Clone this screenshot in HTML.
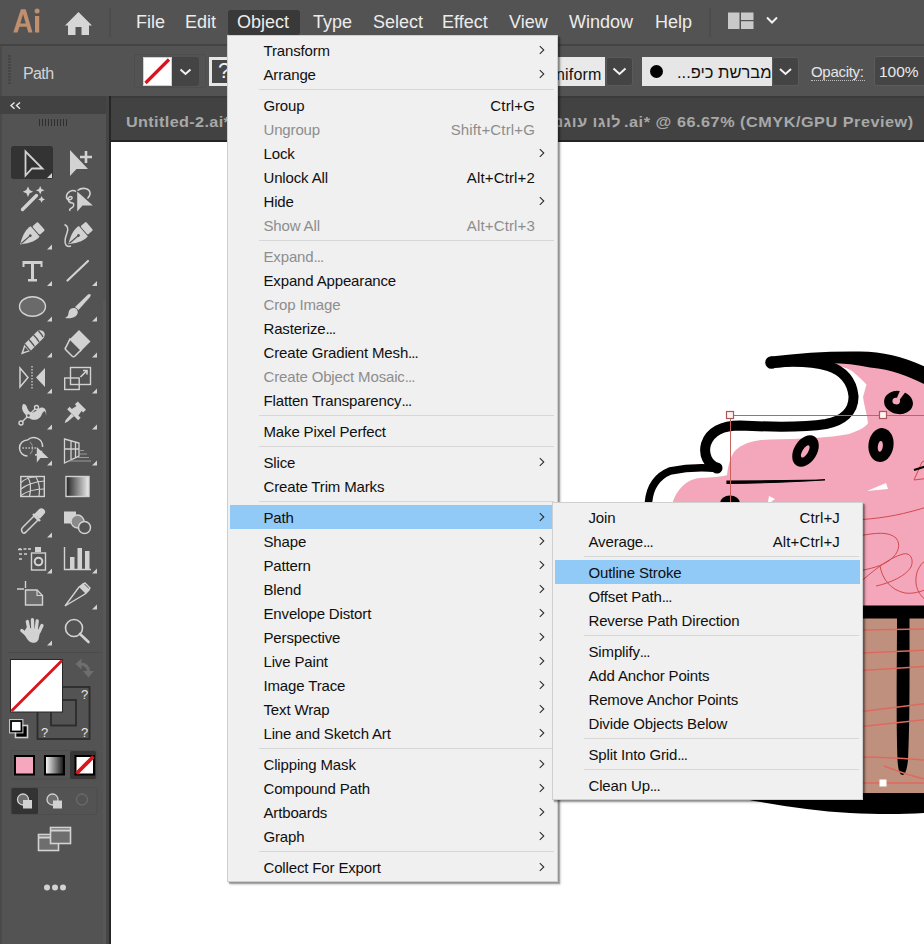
<!DOCTYPE html>
<html><head><meta charset="utf-8">
<style>
*{margin:0;padding:0;box-sizing:border-box}
html,body{width:924px;height:944px;overflow:hidden;background:#535353;font-family:"Liberation Sans",sans-serif;position:relative}
.a{position:absolute}
.mb{position:absolute;color:#ececec;font-size:18px;top:12px;white-space:nowrap}
.mi{position:absolute;font-size:15px;white-space:nowrap;letter-spacing:-0.15px}
.menu{position:absolute;background:#f0f0f0;border:1px solid #cfcfcf;box-shadow:1px 1px 0 rgba(0,0,0,.12),2px 2px 1px rgba(0,0,0,.25),3px 3px 2px rgba(0,0,0,.12)}
.tri{position:absolute;width:0;height:0;border-left:5px solid transparent;border-bottom:5px solid #d0d0d0}
svg{position:absolute;overflow:visible}
</style></head><body>
<!-- menu bar -->
<div class="a" style="left:0;top:0;width:924px;height:44px;background:#535353"></div>
<svg style="left:0;top:0" width="110" height="44">
 <path d="M13.3 32.5 L20.9 9.3 L25.7 9.3 L32.5 32.5 L28.3 32.5 L26.7 26.8 L19.4 26.8 L17.6 32.5 Z M20.3 23.4 L25.8 23.4 L23.05 14 Z" fill="#c08f6e" fill-rule="evenodd"/>
 <rect x="35" y="16" width="4.2" height="16.5" fill="#c08f6e"/>
 <circle cx="37.1" cy="11" r="2.5" fill="#c08f6e"/>
 <path d="M65 25.5 L78.5 12 L92 25.5 L89 25.5 L89 35 L81.5 35 L81.5 27 L75.5 27 L75.5 35 L68 35 L68 25.5 Z" fill="#d6d6d6"/>
</svg>
<div class="a" style="left:109px;top:8px;width:2px;height:29px;background:#4c4c4c"></div>
<div class="mb" style="left:136px">File</div>
<div class="mb" style="left:185px">Edit</div>
<div class="a" style="left:228px;top:10px;width:72px;height:25px;background:#393939;border-radius:3px"></div>
<div class="mb" style="left:237px">Object</div>
<div class="mb" style="left:313px">Type</div>
<div class="mb" style="left:373px">Select</div>
<div class="mb" style="left:442px">Effect</div>
<div class="mb" style="left:509px">View</div>
<div class="mb" style="left:569px">Window</div>
<div class="mb" style="left:655px">Help</div>
<div class="a" style="left:709px;top:8px;width:2px;height:29px;background:#4c4c4c"></div>
<svg style="left:720px;top:0" width="70" height="44">
 <rect x="8" y="12.5" width="11.5" height="16.5" fill="#c9c9c9"/>
 <rect x="21" y="12.5" width="12.5" height="7.5" fill="#c9c9c9"/>
 <rect x="21" y="21.2" width="12.5" height="7.8" fill="#c9c9c9"/>
 <path d="M47 17.5 L52 22.5 L57 17.5" fill="none" stroke="#f2f2f2" stroke-width="2"/>
</svg>

<!-- control bar -->
<div class="a" style="left:0;top:44px;width:924px;height:2px;background:#444444"></div>
<div class="a" style="left:0;top:46px;width:924px;height:50px;background:#535353;border-left:2px solid #4a4a4a"></div>
<svg style="left:0;top:46px" width="20" height="50">
 <path d="M8 10h3M8 13h3M8 16h3M8 19h3M8 22h3M8 25h3M8 28h3M8 31h3M8 34h3M8 37h3" stroke="#3a3a3a" stroke-width="1"/>
</svg>
<div class="a" style="left:23px;top:64.5px;font-size:16px;color:#d4d4d4;letter-spacing:-0.6px">Path</div>
<div class="a" style="left:134px;top:54px;width:72px;height:34px;border:1px solid #4d4d4d;border-radius:3px"></div>
<div class="a" style="left:143px;top:57px;width:29px;height:29px;background:#fff;border:1px solid #d0d0d0"></div>
<svg style="left:143px;top:57px" width="29" height="29"><path d="M2.5 26 L26 2.5" stroke="#d9141b" stroke-width="3.2"/></svg>
<div class="a" style="left:172px;top:57px;width:27px;height:29px;background:#444;border-radius:0 3px 3px 0"></div>
<svg style="left:172px;top:57px" width="27" height="29"><path d="M8.5 12.5 L13.5 17 L18.5 12.5" fill="none" stroke="#f2f2f2" stroke-width="2"/></svg>
<div class="a" style="left:209px;top:57px;width:30px;height:29px;background:#474747;border:3px solid #e6e6e6"></div>
<div class="a" style="left:218px;top:58px;font-size:22px;color:#f0f0f0">?</div>
<div class="a" style="left:545px;top:57px;width:60px;height:29px;background:#e9e9e9"></div>
<div class="a" style="left:556px;top:66px;font-size:16px;color:#111;letter-spacing:0.2px">niform</div>
<div class="a" style="left:606px;top:57px;width:27px;height:29px;background:#444;border:1px solid #5a5a5a;border-radius:3px"></div>
<svg style="left:606px;top:57px" width="27" height="29"><path d="M7.5 11.5 L13.5 17 L19.5 11.5" fill="none" stroke="#f2f2f2" stroke-width="2"/></svg>
<div class="a" style="left:642px;top:57px;width:130px;height:29px;background:#e6e6e6"></div>
<div class="a" style="left:650px;top:65px;width:13px;height:13px;border-radius:50%;background:#000"></div>
<div class="a" style="left:677px;top:63px;font-size:16.5px;color:#111;white-space:nowrap"><bdo dir="ltr">...פיכ תשרבמ</bdo></div>
<div class="a" style="left:772px;top:57px;width:27px;height:29px;background:#444;border:1px solid #5a5a5a;border-radius:3px"></div>
<svg style="left:772px;top:57px" width="27" height="29"><path d="M8 12 L13.5 17 L19 12" fill="none" stroke="#f2f2f2" stroke-width="2"/></svg>
<div class="a" style="left:811px;top:63px;font-size:15px;color:#e6e6e6;letter-spacing:-0.3px">Opacity:</div>
<div class="a" style="left:811px;top:80px;width:54px;height:0;border-top:1px dotted #bdbdbd"></div>
<div class="a" style="left:874px;top:56px;width:60px;height:30px;background:#454545;border:1px solid #5c5c5c;border-radius:3px"></div>
<div class="a" style="left:879px;top:63px;font-size:15.5px;color:#eaeaea">100%</div>

<!-- doc tab bar -->
<div class="a" style="left:111px;top:96px;width:813px;height:2px;background:#3b3b3b"></div>
<div class="a" style="left:111px;top:98px;width:813px;height:43px;background:#424242"></div>
<div class="a" style="left:111px;top:140px;width:813px;height:2px;background:#242424"></div>
<div class="a" style="left:126px;top:113px;font-size:15px;font-weight:bold;color:#a8a8a8;white-space:nowrap;letter-spacing:0.35px;transform:scaleX(1.08);transform-origin:0 0">Untitled-2.ai*</div>
<div id="heb" class="a" style="right:303px;top:113px;font-size:15px;font-weight:bold;color:#a8a8a8;white-space:nowrap;letter-spacing:0.4px;transform:scaleX(1.08);transform-origin:100% 0"><bdo dir="ltr">נגוע וגול</bdo></div>
<div id="tabr" class="a" style="left:624px;top:113px;font-size:15px;font-weight:bold;color:#a8a8a8;white-space:nowrap;letter-spacing:0.5px;transform:scaleX(1.08);transform-origin:0 0">.ai* @ 66.67% (CMYK/GPU Preview)</div>
<div class="a" style="left:111px;top:142px;width:813px;height:802px;background:#ffffff"></div>
<!-- toolbar -->
<div class="a" style="left:0;top:96px;width:111px;height:848px;background:#535353"></div>
<div class="a" style="left:0;top:114px;width:2px;height:830px;background:#4a4a4a"></div>
<div class="a" style="left:0;top:96px;width:107px;height:18px;background:#424242"></div>
<div class="a" style="left:103px;top:300px;width:3px;height:644px;background:#575757"></div>
<div class="a" style="left:106px;top:96px;width:3px;height:848px;background:#454545"></div>
<div class="a" style="left:109px;top:96px;width:2px;height:848px;background:#262626"></div>
<svg style="left:0;top:0" width="111" height="944">
 <g fill="none" stroke="#e8e8e8" stroke-width="1.4"><path d="M14.5 102.5 L11 105.6 L14.5 108.7 M20 102.5 L16.5 105.6 L20 108.7"/></g>
 <g stroke="#2f2f2f" stroke-width="1"><path d="M39.5 119v7M42.5 119v7M45.5 119v7M48.5 119v7M51.5 119v7M54.5 119v7M57.5 119v7M60.5 119v7M63.5 119v7M66.5 119v7"/></g>
 <!-- row1 selection -->
 <rect x="11" y="146" width="42" height="33" rx="2.5" fill="#333333"/>
 <path d="M25.5 151.5 L25.5 175.5 L32 168.5 L42.5 168.5 Z" fill="none" stroke="#d2d2d2" stroke-width="1.8" stroke-linejoin="miter"/>
 <path d="M70 150 L70 176 L76.5 169 L88 169 Z" fill="#d2d2d2"/>
 <path d="M86 151 v12 M80 157 h12" stroke="#d2d2d2" stroke-width="2.6"/>
 <!-- row2 wand, lasso -->
 <path d="M22.5 209.5 L36.5 195.5" stroke="#d2d2d2" stroke-width="3.4" stroke-linecap="round"/>
 <path d="M28 186.5 l1.6 3.6 3.6 1.6 -3.6 1.6 -1.6 3.6 -1.6 -3.6 -3.6 -1.6 3.6 -1.6z M40.2 186 l1.3 3 3 1.3 -3 1.3 -1.3 3 -1.3 -3 -3 -1.3 3 -1.3z M41.6 196 l1.1 2.3 2.3 1.1 -2.3 1.1 -1.1 2.3 -1.1 -2.3 -2.3 -1.1 2.3 -1.1z" fill="#d2d2d2"/>
 <path d="M76 191.5 C72 189 67 192 66.5 196 C66 200 70 200.5 71.5 199 C73.5 197 70 195.5 68.5 198 C67 201 70 203 72.5 203 C74.5 203.5 74 207 71.5 208 C69.5 209 69 210 70.5 210.5" fill="none" stroke="#d2d2d2" stroke-width="1.5"/>
 <path d="M77.5 190.5 C82 187 89 188 90 192.5 C90.5 195 89 197 87.5 198.5" fill="none" stroke="#d2d2d2" stroke-width="1.5"/>
 <path d="M77.2 191.5 L77.2 211.5 L82.5 205.5 L92.8 205.5 Z" fill="#d2d2d2"/>
 <!-- row3 pen, curvature -->
 <g transform="translate(38.6 228.4) rotate(49)" fill="#d2d2d2"><rect x="-5.6" y="-3.6" width="11.2" height="7.2" rx="1.2"/><path d="M-6.8 4.6 H6.8 C7.6 9.5 6.5 15 0 24.5 C-6.5 15 -7.6 9.5 -6.8 4.6 Z"/><path d="M0 11 V23" stroke="#535353" stroke-width="1.3"/><circle cx="0" cy="11" r="1.4" fill="#535353"/></g>
 <g transform="translate(86.8 228.2) rotate(49)" fill="#d2d2d2"><rect x="-5.6" y="-3.6" width="11.2" height="7.2" rx="1.2"/><path d="M-6.8 4.6 H6.8 C7.6 9.5 6.5 15 0 24.5 C-6.5 15 -7.6 9.5 -6.8 4.6 Z"/><path d="M0 11 V23" stroke="#535353" stroke-width="1.3"/><circle cx="0" cy="11" r="1.4" fill="#535353"/></g>
 <path d="M64.5 224.5 C68 226 68.5 229 67 233 C65 238 64 242 66 245 C67.5 247 69.5 246.5 71 246" fill="none" stroke="#d2d2d2" stroke-width="1.5"/>
 <!-- row4 type, line -->
 <path d="M22.5 261 h20 v6 h-2 v-3 h-6.5 v15 h3 v2.5 h-9 v-2.5 h3 v-15 h-6.5 v3 h-2z" fill="#d2d2d2"/>
 <path d="M67.5 280.5 L88 261" stroke="#d2d2d2" stroke-width="2.2" stroke-linecap="round"/>
 <!-- row5 ellipse, brush -->
 <ellipse cx="32.5" cy="306.5" rx="13" ry="9.8" fill="#6a6a6a" stroke="#d2d2d2" stroke-width="1.4"/>
 <path d="M75 307 L88 294.5 C90.5 293 91.5 295 90 297 L78.5 310 Z" fill="#d2d2d2"/>
 <path d="M74.5 308 C78 309 79 313 76 316 C73 318.5 68 318.5 65 318 C69 316 68 314 69 311 C70 308.5 72.5 307.5 74.5 308Z" fill="#d2d2d2"/>
 <!-- row6 shaper pencil, eraser -->
 <path d="M21 354.5 L24.5 344 L37 331.5 C39.5 329.5 43 330 44.5 333 C45 335 44.5 337 43 338.5 L30.5 351 Z" fill="#d2d2d2"/>
 <path d="M24.5 344 L30.5 351 M29 339.5 C31 342 33 344 34.5 346.5 M33.5 335 C36 337.5 38 339.5 39 342 M38.5 331 C40.5 333 42 334.5 43 337" stroke="#535353" stroke-width="1.3" fill="none"/>
 <path d="M23.5 352 L25 347 L28.5 350.5Z" fill="#535353"/>
 <path d="M79 330 L90.5 341.5 L80 352 L68.5 340.5 Z" fill="#d2d2d2"/>
 <path d="M70 339 L81 350 L75 356 C74 357 73 357 72 356 L66 350 C65 349 65 348 66 347 Z" fill="#535353" stroke="#d2d2d2" stroke-width="1.6"/>
 <!-- row7 reflect, scale -->
 <path d="M20 368 L28 377.5 L20 387 Z" fill="none" stroke="#d2d2d2" stroke-width="1.5"/>
 <path d="M45 368 L36 377.5 L45 387 Z" fill="#d2d2d2"/>
 <path d="M32 366 V390" stroke="#d2d2d2" stroke-width="1.3" stroke-dasharray="1.5 1.5"/>
 <rect x="70.5" y="367.5" width="20" height="17" fill="none" stroke="#d2d2d2" stroke-width="1.4"/>
 <rect x="64.7" y="378" width="14.5" height="11.5" fill="none" stroke="#d2d2d2" stroke-width="1.4"/>
 <path d="M80.5 377 L87 370.5 M83 370.5 h4 v4" fill="none" stroke="#d2d2d2" stroke-width="1.6"/>
 <!-- row8 puppet, pin -->
 <path d="M23 404 C20 410 25 414 28 417 C33 422 40 420 42 414 C44 410 46 410 46 416 C47 411 45 406 40 408 C36 410 34 414 30 412 C26 409 28 404 23 404Z" fill="#d2d2d2"/>
 <path d="M21 423 L36.5 407.5" stroke="#d2d2d2" stroke-width="1.4"/>
 <circle cx="21" cy="423" r="2" fill="#535353" stroke="#d2d2d2" stroke-width="1.4"/>
 <circle cx="36.5" cy="407.5" r="2" fill="#535353" stroke="#d2d2d2" stroke-width="1.4"/>
 <circle cx="28.5" cy="415.5" r="2" fill="#535353" stroke="#d2d2d2" stroke-width="1.4"/>
 <g transform="translate(80.8 406.7) rotate(45)" fill="#d2d2d2"><path d="M-5.8 -1.5 H5.8 V2.5 H3.6 L4.6 8 H7.8 V11.5 H-7.8 V8 H-4.6 L-3.6 2.5 H-5.8 Z"/><path d="M-1.9 11.5 H1.9 L1.3 20 L0 23 L-1.3 20 Z"/></g>
 <!-- row9 shape builder, perspective grid -->
 <path d="M27.5 456 A8 8 0 1 1 27.5 440 M27.5 440 A9 9 0 0 1 42.6 447 M42 451 A9 9 0 0 1 35 455" fill="none" stroke="#d2d2d2" stroke-width="1.5"/>
 <path d="M30 442 A8 8 0 0 1 30 454" fill="none" stroke="#8a8a8a" stroke-width="1.2"/>
 <path d="M22.5 448h1.3M25.5 448h1.3M28.5 448h1.3M31.5 448h1.3M34.5 448h1.3" stroke="#d2d2d2" stroke-width="1.4"/>
 <path d="M36.8 447 L36.8 462.5 L40.5 458 L48.5 458 Z" fill="#d2d2d2"/>
 <path d="M64.5 439 L79 443 L79 456 L64.5 463 Z M64.5 449 L79 449 M71 440.5 L71 460 M75.5 442 L75.5 458" fill="none" stroke="#d2d2d2" stroke-width="1.3"/>
 <path d="M79 450.5 h5 M79 454 h8 M78 457.5 h11 M68 461 h23" stroke="#9a9a9a" stroke-width="1.2"/>
 <!-- row10 mesh, gradient -->
 <rect x="20.8" y="476.5" width="23.5" height="20" fill="none" stroke="#d2d2d2" stroke-width="1.4"/>
 <path d="M21 482.5 C25 479 30 477 35 477 M21 489 C26 485 33 482 44 481 M21 495.5 C27 491 35 489 44 489 M27.5 477 C31 482 31 490 29.5 496.5 M36 477 C39 482 40 490 39 496.5" fill="none" stroke="#d2d2d2" stroke-width="1.2"/>
 <defs><linearGradient id="gt" x1="0" x2="1"><stop offset="0" stop-color="#222"/><stop offset="1" stop-color="#eee"/></linearGradient>
 <linearGradient id="gs" x1="0" x2="1"><stop offset="0" stop-color="#fff"/><stop offset="1" stop-color="#111"/></linearGradient></defs>
 <rect x="66" y="476.5" width="23" height="20" fill="url(#gt)" stroke="#d2d2d2" stroke-width="1.4"/>
 <!-- row11 eyedropper, blend -->
 <path d="M23 533 C21 531 21 529 23 527 L34 516 L38 520 L27 531 C25 533 24.5 534 23 533Z" fill="none" stroke="#d2d2d2" stroke-width="1.5"/>
 <path d="M33 514 L40 521 M35 515 L40 510 C42 508.5 45 511 43.5 513 L39 518" fill="#d2d2d2" stroke="#d2d2d2" stroke-width="2.4"/>
 <rect x="64" y="511.5" width="12" height="12" fill="#d2d2d2"/>
 <circle cx="77.5" cy="521.5" r="6.5" fill="#8a8a8a" stroke="#d2d2d2" stroke-width="1.4"/>
 <circle cx="84.5" cy="527.5" r="6" fill="#535353" stroke="#d2d2d2" stroke-width="1.5"/>
 <!-- row12 symbol sprayer, graph -->
 <rect x="31.5" y="553" width="14" height="17" fill="none" stroke="#d2d2d2" stroke-width="1.4"/>
 <circle cx="38.5" cy="561.5" r="3.8" fill="none" stroke="#d2d2d2" stroke-width="2"/>
 <rect x="35" y="547" width="6" height="5" fill="#d2d2d2"/>
 <path d="M19 549h2M18 549.5h4 M23.5 549h3M28 549h3M19 554h3M24 554h3M19 559h3" stroke="#d2d2d2" stroke-width="1.6"/>
 <path d="M64.5 547 V569.5 H91" fill="none" stroke="#d2d2d2" stroke-width="1.4"/>
 <rect x="70" y="557" width="4.5" height="12" fill="#d2d2d2"/>
 <rect x="77.5" y="548" width="4.5" height="21" fill="#d2d2d2"/>
 <rect x="85" y="551" width="4.5" height="18" fill="#d2d2d2"/>
 <!-- row13 artboard, knife -->
 <path d="M17 589 h7 M25.5 581 v7" stroke="#d2d2d2" stroke-width="1.4"/>
 <path d="M25.5 590 L37 590 L42.5 595.5 L42.5 605 L25.5 605 Z" fill="#6a6a6a" stroke="#d2d2d2" stroke-width="1.4"/>
 <path d="M37 590 V595.5 H42.5" fill="none" stroke="#d2d2d2" stroke-width="1.2"/>
 <path d="M85 583 L90 588 L85 594 L65 606 L79 587 Z" fill="none" stroke="#d2d2d2" stroke-width="1.4"/>
 <path d="M83 583 L90 590 L86 594 L79 587 Z" fill="#d2d2d2"/>
 <!-- row14 hand, zoom -->
 <g stroke="#d2d2d2" stroke-width="3.3" stroke-linecap="round"><path d="M27.3 621.5 L29 630 M32.4 619.6 L32.8 629 M37.2 621 L36.2 630 M42 625.5 L39 632 M21.8 630.5 L27 635"/></g>
 <path d="M26.5 627.5 L40.5 630 L38.5 639.5 C37 642.5 34.5 643 32.5 642.8 C30 642.5 28 640.5 26.5 638 L23.5 633 Z" fill="#d2d2d2"/>
 <circle cx="74" cy="628" r="8.5" fill="none" stroke="#d2d2d2" stroke-width="1.6"/>
 <path d="M80 634 L88.5 642" stroke="#d2d2d2" stroke-width="2.6" stroke-linecap="round"/>
 <!-- separator -->
 <path d="M8 652.5 H102" stroke="#4b4b4b" stroke-width="1"/>
 <!-- stroke box -->
 <rect x="37.5" y="687" width="52" height="52" fill="none" stroke="#2c2c2c" stroke-width="1.8"/>
 <rect x="51" y="700" width="25" height="25.5" fill="none" stroke="#2c2c2c" stroke-width="1.8"/>
 <!-- fill box -->
 <rect x="10.5" y="659.5" width="52" height="52.5" fill="#fff" stroke="#262626" stroke-width="1"/>
 <path d="M11.5 711 L62 660.5" stroke="#d9141b" stroke-width="2.8"/>
 <!-- swap arrow dim -->
 <path d="M80 664 C85.5 664 88.5 666.5 88.5 672" fill="none" stroke="#6e6e6e" stroke-width="3"/>
 <path d="M75.5 664 L81.5 658.5 L81.5 669.5 Z M83 671 L94 671 L88.5 677.5 Z" fill="#6e6e6e"/>
 <!-- default colors mini -->
 <rect x="15.5" y="725.5" width="12" height="12" fill="#000" stroke="#cfcfcf" stroke-width="1.6"/>
 <rect x="11" y="721" width="10.5" height="10.5" fill="#fff" stroke="#000" stroke-width="1.8"/>
 <rect x="9.6" y="719.6" width="13.3" height="13.3" fill="none" stroke="#cfcfcf" stroke-width="1"/>
 <!-- color mode buttons -->
 <rect x="11" y="750.5" width="86" height="28.5" rx="2" fill="none" stroke="#4c4c4c" stroke-width="1"/>
 <rect x="70" y="751" width="26" height="28" rx="2" fill="#363636"/>
 <rect x="15" y="756" width="19" height="18.5" fill="#f5a8bd" stroke="#000" stroke-width="2"/>
 <rect x="45" y="756" width="19" height="18.5" fill="url(#gs)" stroke="#000" stroke-width="2"/>
 <rect x="75.5" y="756" width="18.5" height="18.5" fill="#fff" stroke="#000" stroke-width="2"/>
 <path d="M76.5 773.5 L93.5 756.5" stroke="#d9141b" stroke-width="3.8"/>
 <!-- draw modes -->
 <rect x="11" y="787.5" width="86" height="27" rx="2" fill="none" stroke="#4c4c4c" stroke-width="1"/>
 <rect x="11.5" y="788" width="26.5" height="26" rx="1.5" fill="#333"/>
 <circle cx="23" cy="799.5" r="5.5" fill="#6e6e6e" stroke="#d2d2d2" stroke-width="1.3"/>
 <rect x="23" y="800" width="9" height="8.5" fill="#d2d2d2"/>
 <circle cx="52.5" cy="799.5" r="5.5" fill="#6e6e6e" stroke="#d2d2d2" stroke-width="1.3"/>
 <rect x="53" y="800.5" width="9" height="8" fill="#d2d2d2"/>
 <circle cx="82" cy="799.5" r="5.5" fill="none" stroke="#6a6a6a" stroke-width="1.3"/>
 <!-- screen mode -->
 <rect x="38.5" y="834.5" width="20" height="16" fill="#6e6e6e" stroke="#d2d2d2" stroke-width="1.6"/>
 <rect x="50.5" y="827.5" width="20" height="16" fill="#6e6e6e" stroke="#d2d2d2" stroke-width="1.6"/>
 <path d="M51 830.5 h19" stroke="#d2d2d2" stroke-width="2"/>
 <path d="M39 837.5 h11" stroke="#d2d2d2" stroke-width="2"/>
 <!-- more -->
 <circle cx="47" cy="887.5" r="3" fill="#d2d2d2"/><circle cx="55" cy="887.5" r="3" fill="#d2d2d2"/><circle cx="63" cy="887.5" r="3" fill="#d2d2d2"/>
 <!-- ?s -->
 <text x="81" y="699" font-size="13" fill="#e6e6e6" font-family="Liberation Sans">?</text>
 <text x="41" y="737" font-size="13" fill="#e6e6e6" font-family="Liberation Sans">?</text>
 <text x="81" y="737" font-size="13" fill="#e6e6e6" font-family="Liberation Sans">?</text>
 <!-- corner triangles -->
 <g fill="#d2d2d2">
 <path d="M47 178 L52 173 L52 178Z"/>
 <path d="M47 249.5 L52 244.5 L52 249.5Z"/>
 <path d="M47 286 L52 281 L52 286Z"/><path d="M92 286 L97 281 L97 286Z"/>
 <path d="M47 321.5 L52 316.5 L52 321.5Z"/><path d="M92 321.5 L97 316.5 L97 321.5Z"/>
 <path d="M47 357.5 L52 352.5 L52 357.5Z"/><path d="M92 357.5 L97 352.5 L97 357.5Z"/>
 <path d="M47 393.5 L52 388.5 L52 393.5Z"/><path d="M92 393.5 L97 388.5 L97 393.5Z"/>
 <path d="M47 429.5 L52 424.5 L52 429.5Z"/><path d="M92 429.5 L97 424.5 L97 429.5Z"/>
 <path d="M47 465.5 L52 460.5 L52 465.5Z"/><path d="M92 465.5 L97 460.5 L97 465.5Z"/>
 <path d="M47 537.5 L52 532.5 L52 537.5Z"/>
 <path d="M47 573.5 L52 568.5 L52 573.5Z"/><path d="M92 573.5 L97 568.5 L97 573.5Z"/>
 <path d="M92 609.5 L97 604.5 L97 609.5Z"/>
 <path d="M47 645.5 L52 640.5 L52 645.5Z"/>
 </g>
</svg>
<!-- cupcake -->
<svg style="left:0;top:0" width="924" height="944">
 <!-- pink frosting -->
 <path d="M826 364 C860 360 900 366 930 380 L930 606 L600 606 L660 540 C668 520 672 500 677 493 C683 484 690 479 700 478 C712 477 722 477 727 475 C728 468 729 460 734 452 C742 443 755 440 770 439.5 C800 439 830 438 849 434 C858 431 866 427 868 423 C867 414 864 405 863 397 L866.5 384.5 C862 380 857 375 852 371 C845 367 836 365 826 364 Z" fill="#f4a7ba"/>
 <!-- white gap shapes inside pink -->
 <path d="M867 491 L886 483 L888 489 Z" fill="#fff"/>
 <path d="M769 496 L775 499 L771 502 L768 502Z" fill="#fff"/>
 <!-- brown cup -->
 <path d="M600 618 L930 618 L930 795 L600 795 Z" fill="#c0907f"/>
 <!-- black band between -->
 <path d="M600 605.5 L930 605.5 L930 618.5 L600 618.5 Z" fill="#000"/>
 <!-- bottom ellipse -->
 <path d="M700 793 L930 793 L930 812.5 C905 814.5 880 814.5 850 813 C815 811 780 806 742 798.5 Z" fill="#000"/>
 <!-- vertical stroke -->
 <path d="M897 618 L909.5 618 C909.5 660 910 720 908 760 C907 770 905 775 902.5 775 C900 775 898 770 897.5 760 C896 720 897 660 897 618Z" fill="#000"/>
 <!-- outline strokes -->
 <path d="M771 356.5 C800 353 830 351 860 351.5 C885 352 905 357 930 369 L930 387 C910 377 895 370 870 367.5 C850 363 826 362 800 365 C790 366 780 368 771 368 Z" fill="#000"/>
 <path d="M773 362.5 C795 361 815 362 828 366 C844 371 852 382 853.5 396 C854 412 842 421 826 424 C800 428 770 427 740 425.5 C722 425.5 710 432 706 444 C703 455 708 464 717 468" fill="none" stroke="#000" stroke-width="10" stroke-linecap="round"/>
 <path d="M716 468.5 C700 467 685 468 670 471 C658 476 650 486 648.5 502" fill="none" stroke="#000" stroke-width="7.5" stroke-linecap="round"/>
 <circle cx="717" cy="468" r="5.5" fill="#000"/>
 <circle cx="771.5" cy="362.5" r="6.3" fill="#000"/>
 <!-- mouth line -->
 <path d="M727 481 C760 480.8 790 480.5 825 480 C790 482.3 760 483 727 483.5 Z" fill="#000" stroke="#000" stroke-width="1.2"/>
 <!-- eyes -->
 <g transform="translate(805.5 451) rotate(32)"><ellipse cx="0" cy="0" rx="11.5" ry="17" fill="#000"/><ellipse cx="0" cy="0.5" rx="2.8" ry="7" fill="#f4a7ba"/></g>
 <g transform="translate(881 445) rotate(8)"><ellipse cx="0" cy="0" rx="12.5" ry="17" fill="#000"/><ellipse cx="-0.5" cy="1.5" rx="2.5" ry="5.5" fill="#f4a7ba"/></g>
 <g transform="translate(898.5 402.5) rotate(10)"><ellipse cx="0" cy="0" rx="14.5" ry="11.5" fill="#000"/><ellipse cx="-2.5" cy="-1" rx="3.8" ry="3.3" fill="#f4a7ba"/><path d="M-2.5 -3.5 L-0.5 -12 L5 -11.5 L0.5 -2.5 Z" fill="#f4a7ba"/></g>
 <!-- small black blob bottom left -->
 <ellipse cx="730" cy="503" rx="10" ry="7.5" fill="#000"/>
 <!-- red selection lines -->
 <g fill="none" stroke="#d24a4f" stroke-width="1">
  <path d="M862 519.5 C885 518 905 514 930 506"/>
  <path d="M858 536 C875 533 888 531 896 538 C901 544 899 553 890 560 C882 566 870 569 858 571"/>
  <path d="M858 584 C872 572 888 558 903 554 C911 552 914 560 911 567 C906 576 890 583 876 586"/>
  <path d="M880 566 C882 578 890 590 905 593 C913 594 920 592 930 588"/>
  <path d="M930 558 C920 562 915 572 916 583 C917 592 922 598 930 603"/>
  <path d="M914 480 L922 462 L930 458 M914 480 L930 478"/>
 </g>
 <g fill="none" stroke="#de6a5f" stroke-width="1.5">
  <path d="M862 630 L930 629 M862 653 L930 650 M862 670.5 L930 666 M862 711.5 L930 703 M862 726.5 L930 719 M862 757 C890 757 910 759 930 760.5 M862 783 L930 783"/>
  <path d="M884 766 C900 772 915 778 930 780"/>
 </g>
 <path d="M914 470 L930 465" stroke="#000" stroke-width="2"/>
 <path d="M730 415.5 H930 M730.5 415 V502" fill="none" stroke="#c86060" stroke-width="1"/>
 <rect x="726.5" y="411.5" width="7" height="7" fill="#fff4f4" stroke="#a85858" stroke-width="1.2"/>
 <rect x="879.5" y="411.5" width="7" height="7" fill="#fff4f4" stroke="#a85858" stroke-width="1.2"/>
 <rect x="879.5" y="779.5" width="7" height="7" fill="#fff"/>
</svg>
<!-- Object menu -->
<div class="menu" style="left:227px;top:35px;width:331px;height:847px"></div>
<div class="mi" style="left:263.5px;top:42px;color:#0f0f0f">Transform</div>
<svg style="left:539.3px;top:45px" width="6" height="10"><path d="M0.8 1.2 L4.8 5 L0.8 8.8" fill="none" stroke="#2a2a2a" stroke-width="1.05"/></svg>
<div class="mi" style="left:263.5px;top:66px;color:#0f0f0f">Arrange</div>
<svg style="left:539.3px;top:69px" width="6" height="10"><path d="M0.8 1.2 L4.8 5 L0.8 8.8" fill="none" stroke="#2a2a2a" stroke-width="1.05"/></svg>
<div class="a" style="left:259px;top:89px;width:295px;height:1px;background:#d7d7d7"></div>
<div class="mi" style="left:263.5px;top:97px;color:#0f0f0f">Group</div>
<div class="mi" style="right:389px;top:97px;color:#0f0f0f;letter-spacing:0.15px">Ctrl+G</div>
<div class="mi" style="left:263.5px;top:121px;color:#8d8d8d">Ungroup</div>
<div class="mi" style="right:389px;top:121px;color:#8d8d8d;letter-spacing:0.15px">Shift+Ctrl+G</div>
<div class="mi" style="left:263.5px;top:145px;color:#0f0f0f">Lock</div>
<svg style="left:539.3px;top:148px" width="6" height="10"><path d="M0.8 1.2 L4.8 5 L0.8 8.8" fill="none" stroke="#2a2a2a" stroke-width="1.05"/></svg>
<div class="mi" style="left:263.5px;top:169px;color:#0f0f0f">Unlock All</div>
<div class="mi" style="right:389px;top:169px;color:#0f0f0f;letter-spacing:0.15px">Alt+Ctrl+2</div>
<div class="mi" style="left:263.5px;top:193px;color:#0f0f0f">Hide</div>
<svg style="left:539.3px;top:196px" width="6" height="10"><path d="M0.8 1.2 L4.8 5 L0.8 8.8" fill="none" stroke="#2a2a2a" stroke-width="1.05"/></svg>
<div class="mi" style="left:263.5px;top:217px;color:#8d8d8d">Show All</div>
<div class="mi" style="right:389px;top:217px;color:#8d8d8d;letter-spacing:0.15px">Alt+Ctrl+3</div>
<div class="a" style="left:259px;top:240px;width:295px;height:1px;background:#d7d7d7"></div>
<div class="mi" style="left:263.5px;top:248px;color:#8d8d8d">Expand<span style="letter-spacing:-0.9px">...</span></div>
<div class="mi" style="left:263.5px;top:272px;color:#0f0f0f">Expand Appearance</div>
<div class="mi" style="left:263.5px;top:296px;color:#8d8d8d">Crop Image</div>
<div class="mi" style="left:263.5px;top:320px;color:#0f0f0f">Rasterize<span style="letter-spacing:-0.9px">...</span></div>
<div class="mi" style="left:263.5px;top:344px;color:#0f0f0f">Create Gradient Mesh<span style="letter-spacing:-0.9px">...</span></div>
<div class="mi" style="left:263.5px;top:368px;color:#8d8d8d">Create Object Mosaic<span style="letter-spacing:-0.9px">...</span></div>
<div class="mi" style="left:263.5px;top:392px;color:#0f0f0f">Flatten Transparency<span style="letter-spacing:-0.9px">...</span></div>
<div class="a" style="left:259px;top:415px;width:295px;height:1px;background:#d7d7d7"></div>
<div class="mi" style="left:263.5px;top:423px;color:#0f0f0f">Make Pixel Perfect</div>
<div class="a" style="left:259px;top:446px;width:295px;height:1px;background:#d7d7d7"></div>
<div class="mi" style="left:263.5px;top:454px;color:#0f0f0f">Slice</div>
<svg style="left:539.3px;top:457px" width="6" height="10"><path d="M0.8 1.2 L4.8 5 L0.8 8.8" fill="none" stroke="#2a2a2a" stroke-width="1.05"/></svg>
<div class="mi" style="left:263.5px;top:478px;color:#0f0f0f">Create Trim Marks</div>
<div class="a" style="left:259px;top:501px;width:295px;height:1px;background:#d7d7d7"></div>
<div class="a" style="left:230px;top:505px;width:325px;height:24px;background:#91c9f7"></div>
<div class="mi" style="left:263.5px;top:509px;color:#0f0f0f">Path</div>
<svg style="left:539.3px;top:512px" width="6" height="10"><path d="M0.8 1.2 L4.8 5 L0.8 8.8" fill="none" stroke="#2a2a2a" stroke-width="1.05"/></svg>
<div class="mi" style="left:263.5px;top:533px;color:#0f0f0f">Shape</div>
<svg style="left:539.3px;top:536px" width="6" height="10"><path d="M0.8 1.2 L4.8 5 L0.8 8.8" fill="none" stroke="#2a2a2a" stroke-width="1.05"/></svg>
<div class="mi" style="left:263.5px;top:557px;color:#0f0f0f">Pattern</div>
<svg style="left:539.3px;top:560px" width="6" height="10"><path d="M0.8 1.2 L4.8 5 L0.8 8.8" fill="none" stroke="#2a2a2a" stroke-width="1.05"/></svg>
<div class="mi" style="left:263.5px;top:581px;color:#0f0f0f">Blend</div>
<svg style="left:539.3px;top:584px" width="6" height="10"><path d="M0.8 1.2 L4.8 5 L0.8 8.8" fill="none" stroke="#2a2a2a" stroke-width="1.05"/></svg>
<div class="mi" style="left:263.5px;top:605px;color:#0f0f0f">Envelope Distort</div>
<svg style="left:539.3px;top:608px" width="6" height="10"><path d="M0.8 1.2 L4.8 5 L0.8 8.8" fill="none" stroke="#2a2a2a" stroke-width="1.05"/></svg>
<div class="mi" style="left:263.5px;top:629px;color:#0f0f0f">Perspective</div>
<svg style="left:539.3px;top:632px" width="6" height="10"><path d="M0.8 1.2 L4.8 5 L0.8 8.8" fill="none" stroke="#2a2a2a" stroke-width="1.05"/></svg>
<div class="mi" style="left:263.5px;top:653px;color:#0f0f0f">Live Paint</div>
<svg style="left:539.3px;top:656px" width="6" height="10"><path d="M0.8 1.2 L4.8 5 L0.8 8.8" fill="none" stroke="#2a2a2a" stroke-width="1.05"/></svg>
<div class="mi" style="left:263.5px;top:677px;color:#0f0f0f">Image Trace</div>
<svg style="left:539.3px;top:680px" width="6" height="10"><path d="M0.8 1.2 L4.8 5 L0.8 8.8" fill="none" stroke="#2a2a2a" stroke-width="1.05"/></svg>
<div class="mi" style="left:263.5px;top:701px;color:#0f0f0f">Text Wrap</div>
<svg style="left:539.3px;top:704px" width="6" height="10"><path d="M0.8 1.2 L4.8 5 L0.8 8.8" fill="none" stroke="#2a2a2a" stroke-width="1.05"/></svg>
<div class="mi" style="left:263.5px;top:725px;color:#0f0f0f">Line and Sketch Art</div>
<svg style="left:539.3px;top:728px" width="6" height="10"><path d="M0.8 1.2 L4.8 5 L0.8 8.8" fill="none" stroke="#2a2a2a" stroke-width="1.05"/></svg>
<div class="a" style="left:259px;top:748px;width:295px;height:1px;background:#d7d7d7"></div>
<div class="mi" style="left:263.5px;top:756px;color:#0f0f0f">Clipping Mask</div>
<svg style="left:539.3px;top:759px" width="6" height="10"><path d="M0.8 1.2 L4.8 5 L0.8 8.8" fill="none" stroke="#2a2a2a" stroke-width="1.05"/></svg>
<div class="mi" style="left:263.5px;top:780px;color:#0f0f0f">Compound Path</div>
<svg style="left:539.3px;top:783px" width="6" height="10"><path d="M0.8 1.2 L4.8 5 L0.8 8.8" fill="none" stroke="#2a2a2a" stroke-width="1.05"/></svg>
<div class="mi" style="left:263.5px;top:804px;color:#0f0f0f">Artboards</div>
<svg style="left:539.3px;top:807px" width="6" height="10"><path d="M0.8 1.2 L4.8 5 L0.8 8.8" fill="none" stroke="#2a2a2a" stroke-width="1.05"/></svg>
<div class="mi" style="left:263.5px;top:828px;color:#0f0f0f">Graph</div>
<svg style="left:539.3px;top:831px" width="6" height="10"><path d="M0.8 1.2 L4.8 5 L0.8 8.8" fill="none" stroke="#2a2a2a" stroke-width="1.05"/></svg>
<div class="a" style="left:259px;top:851px;width:295px;height:1px;background:#d7d7d7"></div>
<div class="mi" style="left:263.5px;top:859px;color:#0f0f0f">Collect For Export</div>
<svg style="left:539.3px;top:862px" width="6" height="10"><path d="M0.8 1.2 L4.8 5 L0.8 8.8" fill="none" stroke="#2a2a2a" stroke-width="1.05"/></svg>
<!-- Path submenu -->
<div class="menu" style="left:552px;top:502px;width:311px;height:298px"></div>
<div class="mi" style="left:588.5px;top:509px;color:#0f0f0f">Join</div>
<div class="mi" style="right:84px;top:509px;color:#0f0f0f;letter-spacing:0.15px">Ctrl+J</div>
<div class="mi" style="left:588.5px;top:533px;color:#0f0f0f">Average<span style="letter-spacing:-0.9px">...</span></div>
<div class="mi" style="right:84px;top:533px;color:#0f0f0f;letter-spacing:0.15px">Alt+Ctrl+J</div>
<div class="a" style="left:584px;top:556px;width:275px;height:1px;background:#d7d7d7"></div>
<div class="a" style="left:555px;top:560px;width:305px;height:24px;background:#91c9f7"></div>
<div class="mi" style="left:588.5px;top:564px;color:#0f0f0f">Outline Stroke</div>
<div class="mi" style="left:588.5px;top:588px;color:#0f0f0f">Offset Path<span style="letter-spacing:-0.9px">...</span></div>
<div class="mi" style="left:588.5px;top:612px;color:#0f0f0f">Reverse Path Direction</div>
<div class="a" style="left:584px;top:635px;width:275px;height:1px;background:#d7d7d7"></div>
<div class="mi" style="left:588.5px;top:643px;color:#0f0f0f">Simplify<span style="letter-spacing:-0.9px">...</span></div>
<div class="mi" style="left:588.5px;top:667px;color:#0f0f0f">Add Anchor Points</div>
<div class="mi" style="left:588.5px;top:691px;color:#0f0f0f">Remove Anchor Points</div>
<div class="mi" style="left:588.5px;top:715px;color:#0f0f0f">Divide Objects Below</div>
<div class="a" style="left:584px;top:738px;width:275px;height:1px;background:#d7d7d7"></div>
<div class="mi" style="left:588.5px;top:746px;color:#0f0f0f">Split Into Grid<span style="letter-spacing:-0.9px">...</span></div>
<div class="a" style="left:584px;top:769px;width:275px;height:1px;background:#d7d7d7"></div>
<div class="mi" style="left:588.5px;top:777px;color:#0f0f0f">Clean Up<span style="letter-spacing:-0.9px">...</span></div>
</body></html>
